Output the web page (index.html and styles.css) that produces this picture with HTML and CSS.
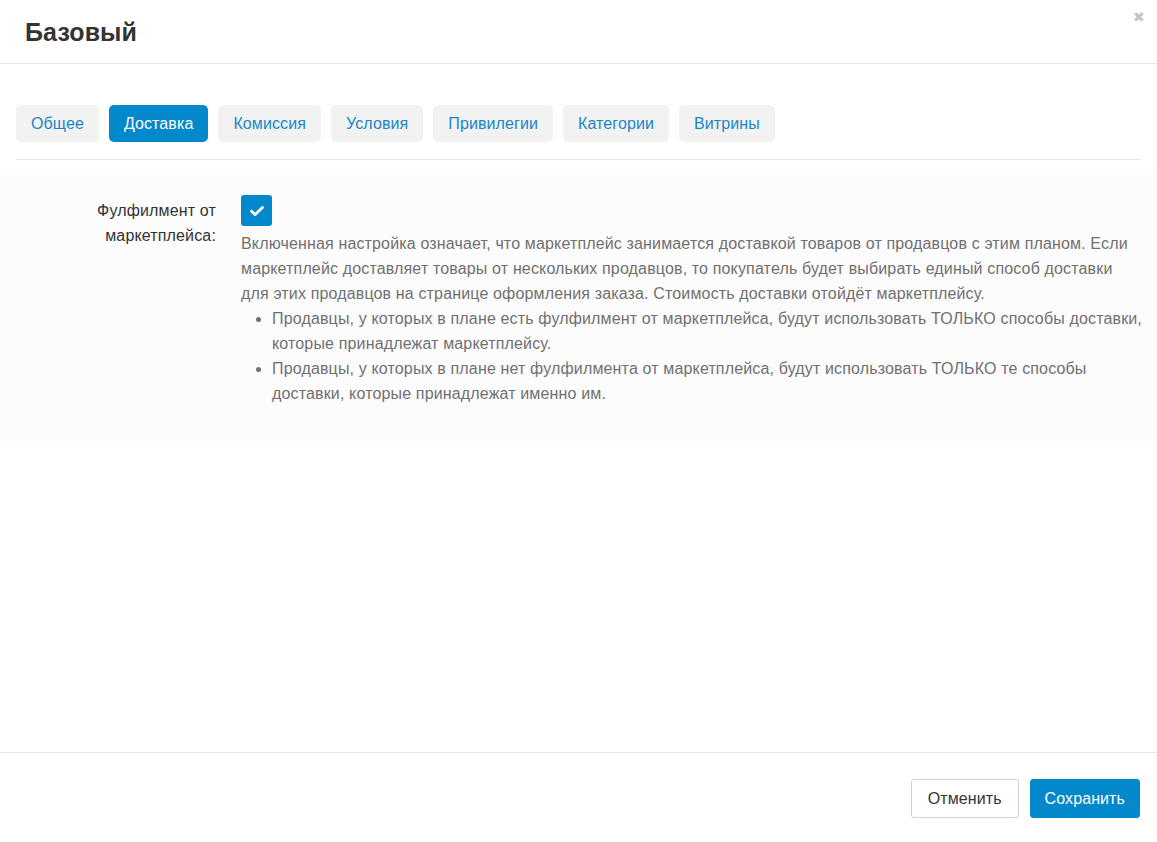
FILE: index.html
```html
<!DOCTYPE html>
<html lang="ru">
  <head>
    <meta charset="utf-8">
    <title>Базовый</title>
    <link rel="stylesheet" href="styles.css">
  </head>
  <body>
    <div class="modal">
      <div class="modal-header">
        <h3 class="modal-title">Базовый</h3>
        <span class="close">&#x2716;</span>
      </div>

      <div class="modal-body">
        <ul class="tabs">
          <li><a href="#">Общее</a></li>
          <li class="active"><a href="#">Доставка</a></li>
          <li><a href="#">Комиссия</a></li>
          <li><a href="#">Условия</a></li>
          <li><a href="#">Привилегии</a></li>
          <li><a href="#">Категории</a></li>
          <li><a href="#">Витрины</a></li>
        </ul>

        <div class="tab-content">
          <div class="control-group">
            <label class="control-label">Фулфилмент от маркетплейса:</label>
            <div class="controls">
              <span class="checkbox">
                <svg width="16" height="16" viewBox="0 0 16 16"><path d="M2.5 8.2 L6.2 11.6 L13.5 4.4" fill="none" stroke="#fff" stroke-width="2.8" stroke-linecap="round" stroke-linejoin="round"/></svg>
              </span>
              <div class="help">
                <p>Включенная настройка означает, что маркетплейс занимается доставкой товаров от продавцов с этим планом. Если маркетплейс доставляет товары от нескольких продавцов, то покупатель будет выбирать единый способ доставки для этих продавцов на странице оформления заказа. Стоимость доставки отойдёт маркетплейсу.</p>
                <ul>
                  <li>Продавцы, у которых в плане есть фулфилмент от маркетплейса, будут использовать ТОЛЬКО способы доставки, которые принадлежат маркетплейсу.</li>
                  <li>Продавцы, у которых в плане нет фулфилмента от маркетплейса, будут использовать ТОЛЬКО те способы доставки, которые принадлежат именно им.</li>
                </ul>
              </div>
            </div>
          </div>
        </div>
      </div>

      <div class="modal-footer">
        <button class="btn">Отменить</button>
        <button class="btn btn-primary">Сохранить</button>
      </div>
    </div>
  </body>
</html>
```

FILE: styles.css
```css
html {
  height: 100%;
}
body {
  margin: 0;
  padding: 0;
  background: #ffffff;
  color: #333333;
  font-family: "Liberation Sans", Arial, sans-serif;
  font-size: 16px;
  letter-spacing: 0.15px;
  line-height: 25px;
  height: 100%;
}
.modal {
  height: 842px;
  display: flex;
  flex-direction: column;
}
.modal-header {
  height: 63px;
  border-bottom: 1px solid #e8e8ea;
  display: flex;
  align-items: flex-start;
  justify-content: space-between;
  padding: 0 12px 0 25px;
}
.modal-title {
  margin: 16px 0 0;
  font-size: 25px;
  letter-spacing: 0.1px;
  line-height: 32px;
  font-weight: bold;
  color: #333333;
}
.close {
  margin-top: 7px;
  font-size: 14px;
  color: #c4c4c4;
  line-height: 20px;
}
.modal-body {
  flex: 1;
  padding-top: 41px;
}
.tabs {
  list-style: none;
  margin: 0 16px;
  padding: 0 0 17px;
  display: flex;
  gap: 10px;
  border-bottom: 1px solid #e3e6ea;
}
.tabs li a {
  display: block;
  height: 37px;
  line-height: 37px;
  padding: 0 15px;
  background: #f2f2f2;
  border-radius: 5px;
  color: #1a86c8;
  text-decoration: none;
  font-size: 16px;
  letter-spacing: 0.1px;
}
.tabs li.active a {
  background: #0288cb;
  color: #ffffff;
}
.tab-content {
  margin-top: 10px;
  background: #fcfcfd;
  padding: 25px 0 35px;
}
.control-group {
  display: flex;
}
.control-label {
  width: 160px;
  margin-left: 56px;
  flex-shrink: 0;
  text-align: right;
  padding-top: 3px;
  color: #333333;
}
.controls {
  margin-left: 25px;
  padding-right: 12px;
}
.checkbox {
  display: flex;
  align-items: center;
  justify-content: center;
  width: 31px;
  height: 31px;
  background: #0288cb;
  border-radius: 3px;
  margin-bottom: 5px;
}
.help {
  color: #707070;
}
.help p {
  margin: 0;
  padding-right: 4px;
}
.help ul {
  margin: 0;
  padding-left: 31px;
}
.modal-footer {
  border-top: 1px solid #e8e8ea;
  height: 90px;
  display: flex;
  justify-content: flex-end;
  align-items: flex-start;
  gap: 11px;
  padding: 26px 17px 0 0;
  box-sizing: border-box;
}
.btn {
  font-family: "Liberation Sans", Arial, sans-serif;
  font-size: 16px;
  letter-spacing: 0.1px;
  height: 39px;
  padding: 0 16px;
  background: #ffffff;
  border: 1px solid #ccd3db;
  border-radius: 3px;
  color: #333333;
}
.btn-primary {
  padding: 0 14px;
  background: #0288cb;
  border-color: #0288cb;
  color: #ffffff;
}
```
